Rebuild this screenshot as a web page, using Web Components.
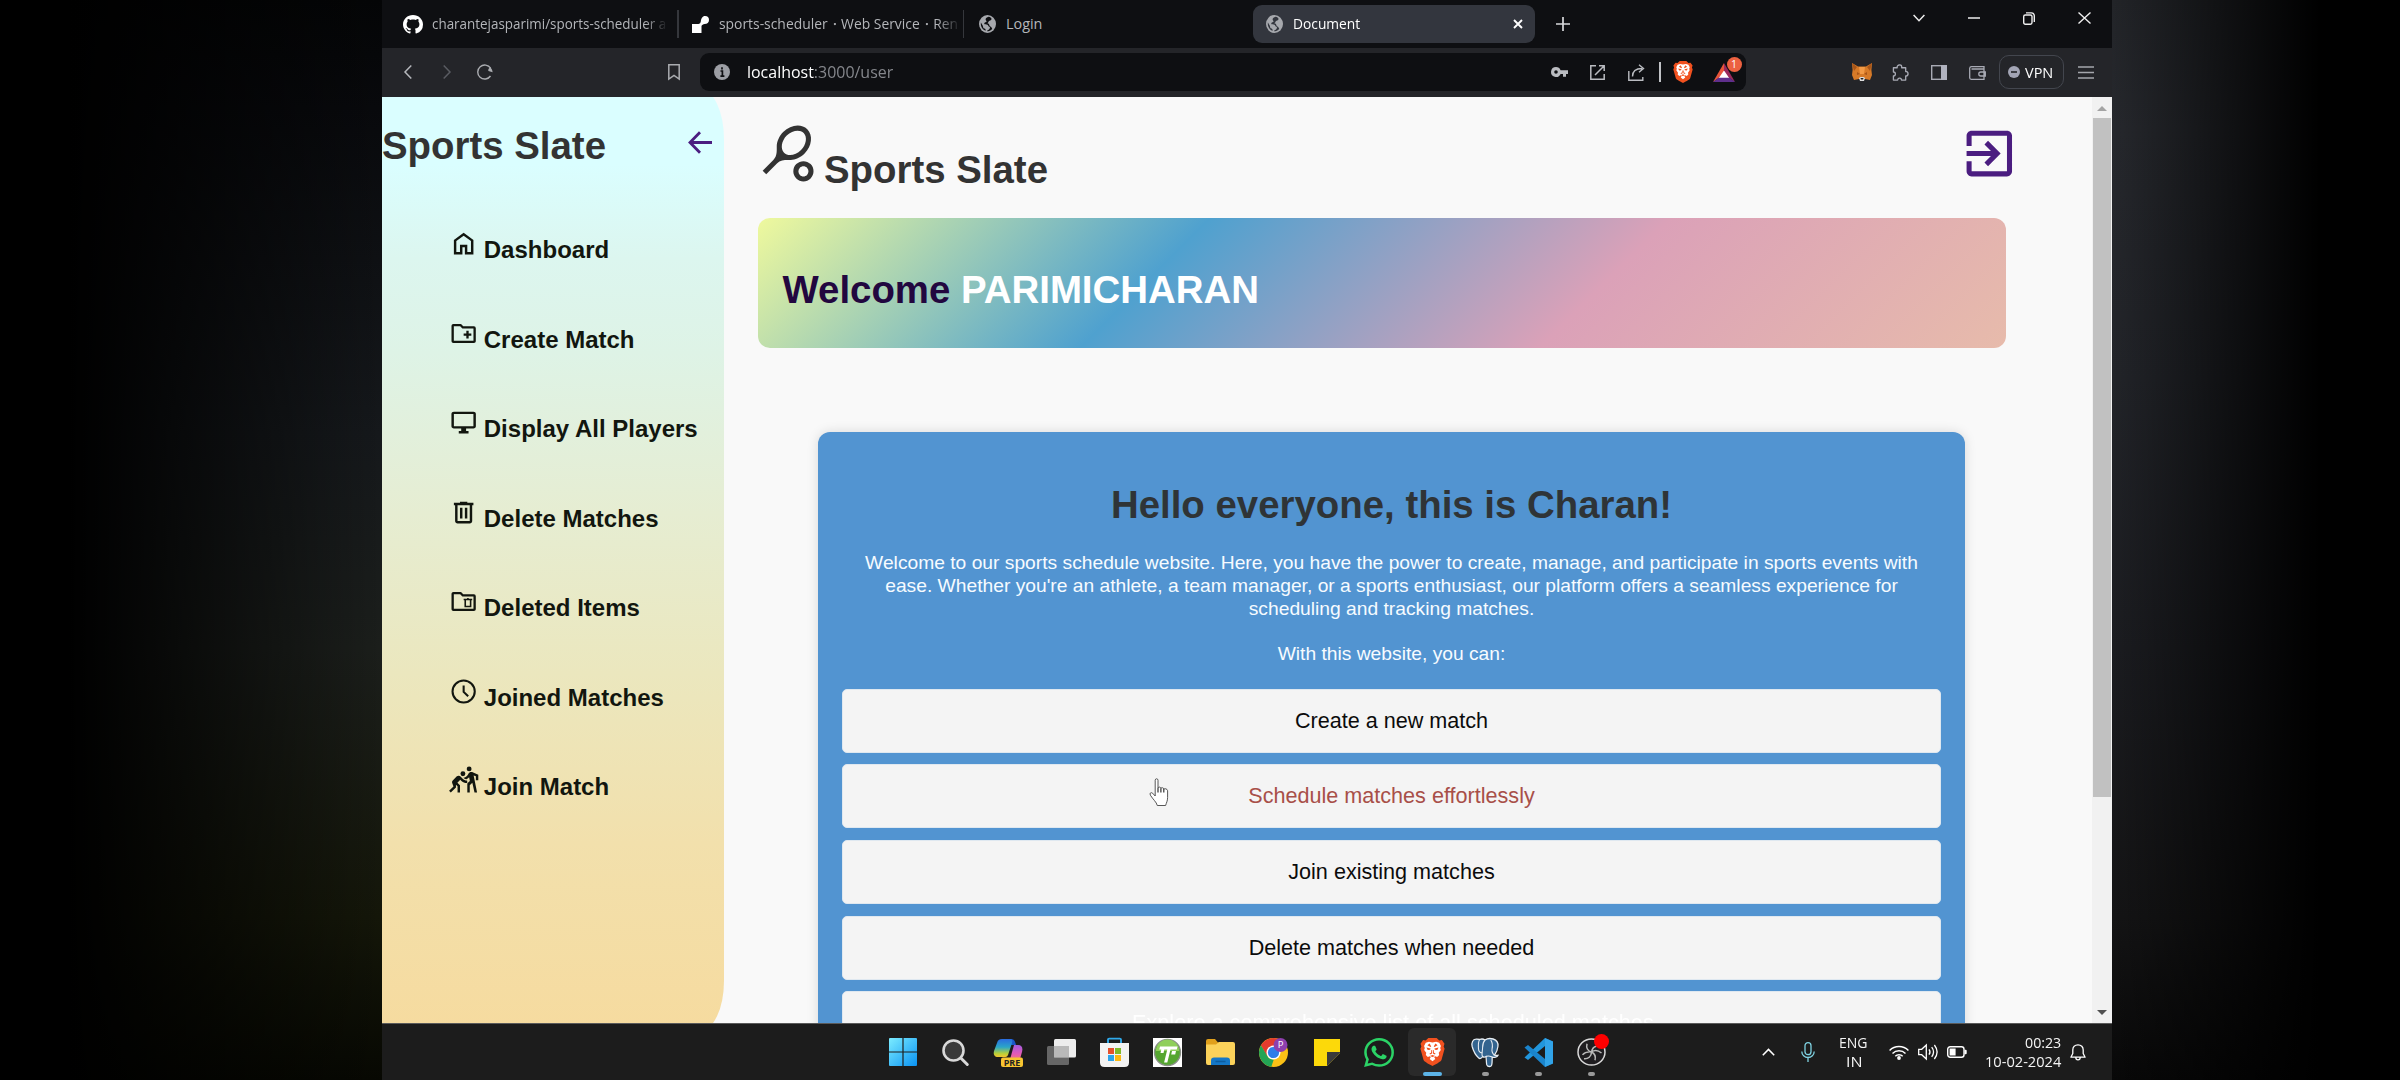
<!DOCTYPE html>
<html lang="en">
<head>
<meta charset="utf-8">
<title>Document</title>
<style>
html,body{margin:0;padding:0;background:#000;width:2400px;height:1080px;overflow:hidden}
body{font-family:"Liberation Sans",Arial,sans-serif}
</style>
</head>
<body>
<desktop-stage></desktop-stage>
<script>
const ICONS = {
github:['0 0 16 16','<path fill="#fff" d="M8 0C3.58 0 0 3.58 0 8c0 3.54 2.29 6.53 5.47 7.59.4.07.55-.17.55-.38 0-.19-.01-.82-.01-1.49-2.01.37-2.53-.49-2.69-.94-.09-.23-.48-.94-.82-1.13-.28-.15-.68-.52-.01-.53.63-.01 1.08.58 1.23.82.72 1.21 1.87.87 2.33.66.07-.52.28-.87.51-1.07-1.78-.2-3.64-.89-3.64-3.95 0-.87.31-1.59.82-2.15-.08-.2-.36-1.02.08-2.12 0 0 .67-.21 2.2.82.64-.18 1.32-.27 2-.27s1.36.09 2 .27c1.53-1.04 2.2-.82 2.2-.82.44 1.1.16 1.92.08 2.12.51.56.82 1.27.82 2.15 0 3.07-1.87 3.75-3.65 3.95.29.25.54.73.54 1.48 0 1.07-.01 1.93-.01 2.2 0 .21.15.46.55.38A8.01 8.01 0 0 0 16 8c0-4.42-3.58-8-8-8z"/>'],
render:['0 0 17 17','<path fill="#fff" d="M0 8h6.5a2.5 2.5 0 0 0 2.3-2.4C9 2.500 10.500 0 13 0a4 4 0 0 1 4 4c0 2.500-1.800 4-4.300 4.100-1.700.1-2.700 1-3.200 2V17H0z"/>'],
globe:['0 0 18 18','<circle cx="9" cy="9" r="9" fill="#a6a8ad"/><path fill="var(--hole,#0e0f12)" d="M10 1.800c-1.500 1-3 1-3 2.600 0 1 1 1.100 1 2 0 .9-2.500.6-2.500 2 0 1.200 2.300.8 3.500 1.300 1.100.5.5 1.600 1.600 1.800 1.400.3 1.200 1.500.4 2.500-.9 1.200-2 1-2.600 2 2 .6 4.200-.4 5.600-1.900-.4-1.500-1-2.200-2-2.600-1.500-.6-.6-2.500-2.300-2.900C8 8.200 10 8 10.200 6.600c.2-1.200 1.600-.6 2.500-1.500.6-.6.6-1.500.2-2.200-.9-.6-1.900-1-2.900-1.100zM2 7.500C1.600 9.800 2.300 12.300 4 14c.9.900 1.800 1.500 3 1.800.3-1-.3-1.900-1.300-2.200-1.500-.5-1.200-1.600-1.600-2.700-.3-.9-1.200-1.700-2.100-3.400z"/>'],
close:['0 0 10 10','<path d="M1 1l8 8M9 1l-8 8" stroke="#fff" stroke-width="1.900"/>'],
plus:['0 0 14 14','<path d="M7 0v14M0 7h14" stroke="#d8d9dc" stroke-width="1.700"/>'],
chev:['0 0 12 8','<path d="M.6 1l5.400 5.700L11.400 1" stroke="#eee" stroke-width="1.500" fill="none"/>'],
min:['0 0 12 2','<path d="M0 1h12" stroke="#eee" stroke-width="1.500"/>'],
rest:['0 0 12 13','<rect x=".7" y="3" width="8.300" height="9.200" rx="1.600" fill="none" stroke="#eee" stroke-width="1.400"/><path d="M3 .9h5.500A2.800 2.800 0 0 1 11.300 3.700V10" fill="none" stroke="#eee" stroke-width="1.400"/>'],
winx:['0 0 13 12','<path d="M.5.5l12 11M12.500.5l-12 11" stroke="#eee" stroke-width="1.400"/>'],
back:['0 0 8 14','<path d="M7.300.5L1 7l6.300 6.500" fill="none" stroke="#b5b7bb" stroke-width="1.500"/>'],
fwd:['0 0 8 14','<path d="M.7.500L7 7 .7 13.500" fill="none" stroke="#5a5c62" stroke-width="1.500"/>'],
reload:['0 0 16 16','<path d="M13.500 12A7 7 0 1 1 13.600 4.200" fill="none" stroke="#aaacb0" stroke-width="1.400"/><path d="M15.600 8.300l-4.200-1.200c-.6-1.400.3-3 2.200-3.600.9 1.200 1.900 2.700 2 4.800z" fill="#aaacb0"/>'],
bookmark:['0 0 12 16','<path d="M.8.800h10.400v14.200L6 11.300.8 15z" fill="none" stroke="#aaacb0" stroke-width="1.500"/>'],
info:['0 0 16 16','<circle cx="8" cy="8" r="8" fill="#9c9ea4"/><path d="M8 3.300v2.200M6.500 7H8.400v5.200M6.400 12.200h4" stroke="#0e0f12" stroke-width="1.700" fill="none"/>'],
key:['0 0 17 10','<path fill="#babcc1" fill-rule="evenodd" d="M5 0a5 5 0 1 0 4.600 7H12v2.800h3V7h2V3.200H9.600A5 5 0 0 0 5 0zm0 3.200a1.800 1.800 0 1 1 0 3.600 1.800 1.800 0 0 1 0-3.600z"/>'],
open:['0 0 15 15','<path d="M6 .800H.8v13.400h13.400V9M9 .8h5.200V6M14 1L5 10" fill="none" stroke="#babcc1" stroke-width="1.500"/>'],
share:['0 0 17 17','<path d="M.8 7v9.200h14V13M4.500 12.500C4.500 7.500 8 4.500 14 4.500M11 .8l4.500 3.700L11 8.300" fill="none" stroke="#babcc1" stroke-width="1.400"/>'],
brave:['0 0 24 28','<path fill="#f1511f" d="M8 0h8l2.500 2.500 2.500-.4 2.500 3.600-.8 2.700.9 2.400-3 11.200c-.4 1.300-4 3.600-8.600 6C7.400 25.600 3.800 23.300 3.400 22L.4 10.800l.9-2.400-.8-2.700L3 2.100l2.500.4z"/><path fill="#fff" d="M12 4.600l3.500-.8 3 1 1.600 3.100-.7 2 .6 2-2 2.900.4 2.300-1.900 2-1.900-.9-.9 1 1 1.700-2.700 2.300-2.700-2.300 1-1.700-.9-1-1.900.9-1.900-2 .4-2.300-2-2.900.6-2-.7-2 1.600-3.100 3-1z"/><path fill="#f1511f" d="M6.200 9.600l4 .9-.5 1.300-2.300.2zM17.800 9.600l-4 .9.500 1.300 2.300.2zM9.200 5.500l1.600 3-.7.6-3-1.800zM14.800 5.500l-1.600 3 .7.6 3-1.800zM10.900 12h.7v3.500l-2 .9-.5-.9 1.500-.8zM13.100 12h-.7v3.500l2 .9.500-.9-1.500-.8zM9.500 18l2.500-1 2.500 1-2.500 1z"/>'],
bat:['0 0 22 20','<path fill="#fff" d="M11 6l6 10H5z"/><path fill="#e8553a" d="M11 0v8L6 15.500 0 20z"/><path fill="#9a2a5c" d="M11 0l11 20-6-4.500L11 8z"/><path fill="#5f2f8c" d="M0 20l5.500-4.500h11L22 20z"/>'],
fox:['0 0 20 18','<path fill="#d67a28" d="M0 0l6 3.500h8L20 0l-.6 7 .6 5-2 5-5-1H7l-5 1-2-5 .6-5z"/><path fill="#a85518" d="M0 0l5 4-3 4zM20 0l-5 4 3 4zM5 9l3 2-3 1zM15 9l-3 2 3 1z"/><path fill="#f29a45" d="M7 4h6l-1 7H8z"/><path fill="#ddd" d="M7 15l1.500-1h3L13 15l-1 3H8z"/><path fill="#222" d="M8.500 15h3l-.5 1.500H9z"/>'],
puzzle:['0 0 18 18','<path d="M1.500 4h4c-.8-3 4.500-4.500 4.800-1 0 .4 0 .7-.1 1h4.300v4c3-.6 3.500 4.500.3 4.800l-.3-.1V17H10c.3-2.500-3.800-2.800-4 0H1.500v-4.500c2.800 0 2.800-4 0-4z" fill="none" stroke="#a8aab4" stroke-width="1.400" stroke-linejoin="round"/>'],
panel:['0 0 16 15','<rect x=".7" y=".7" width="14.600" height="13.600" fill="none" stroke="#a8aab4" stroke-width="1.400"/><path d="M10 0h6v15h-6z" fill="#b0b2be"/>'],
wallet:['0 0 17 15','<path d="M15 4V1.700H2.500a1.800 1.800 0 0 0-1.800 1.600v9.500c0 .9.500 1.500 1.500 1.500H15V4H2.500M16.300 7v4h-4.500a2 2 0 0 1 0-4z" fill="none" stroke="#a8aab4" stroke-width="1.300"/>'],
vpn:['0 0 12 12','<circle cx="6" cy="6" r="6" fill="#a3a5b5"/><path d="M3 6h6" stroke="#242529" stroke-width="1.600"/>'],
menu:['0 0 16 13','<path d="M0 1h16M0 6.500h16M0 12h16" stroke="#a4a6ac" stroke-width="1.400"/>'],
left:['0 0 24 23','<path d="M12 1.200L2 11.500 12 21.800M2 11.500h22" fill="none" stroke="#4b1d80" stroke-width="2.800"/>'],
home:['0 0 24 24','<path d="M6 19h3v-6h6v6h3v-9l-6-4.500L6 10v9Zm-2 2V9l8-6 8 6v12h-7v-6h-2v6H4Z"/>'],
folderadd:['0 0 24 24','<path fill="none" stroke="currentColor" stroke-width="1.900" stroke-linejoin="round" d="M3 5.500Q3 5 3.600 5h5.800l2 2h9Q21 7 21 7.600v10.900q0 .5-.6.5H3.600q-.6 0-.6-.5z"/><path d="M14.200 9.800h1.900v2.200h2.200v1.900h-2.200v2.200h-1.900v-2.200H12V12h2.200z"/>'],
monitor:['0 0 24 24','<path d="M8 21v-2h2v-2H4q-.825 0-1.412-.587T2 15V5q0-.825.588-1.412T4 3h16q.825 0 1.413.588T22 5v10q0 .825-.587 1.413T20 17h-6v2h2v2H8Zm-4-6h16V5H4v10Z"/>'],
trash:['0 0 24 24','<path fill-rule="evenodd" d="M7 21q-.825 0-1.412-.587T5 19V6H4V4h5V3h6v1h5v2h-1v13q0 .825-.587 1.413T17 21H7ZM17 6H7v13h10V6ZM9 17h2V8H9v9Zm4 0h2V8h-2v9Z"/>'],
folderdel:['0 0 24 24','<path fill="none" stroke="currentColor" stroke-width="1.900" stroke-linejoin="round" d="M3 5.500Q3 5 3.600 5h5.800l2 2h9Q21 7 21 7.600v10.900q0 .5-.6.5H3.600q-.6 0-.6-.5z"/><path fill="none" stroke="currentColor" stroke-width="1.300" d="M12 10.400h7M15.500 9v1.500M13.300 10.500v5.700h4.400v-5.700"/>'],
clock:['0 0 24 24','<circle cx="12" cy="12" r="9.100" fill="none" stroke="currentColor" stroke-width="1.700"/><path d="M12 7v5.300l3.700 3.700" fill="none" stroke="currentColor" stroke-width="1.700"/>'],
kabaddi:['0 0 24 24','<circle cx="16.500" cy="2.380" r="2"/><path d="M24 11.880v-4.700l-5.050-2.140c-.97-.41-2.090-.06-2.650.84l-1 1.600c-.67 1.180-1.910 2.060-3.410 2.320l.06.06c.69.69 1.520 1.070 2.460 1.170.8-.42 1.520-.98 2.090-1.640l.6 3-1.160 1.100-.94.890v7.500h2v-6l2.100-2 1.800 8H23l-2.180-11-.62-3.100 1.800.7v3.400H24zM11.240 10.560l-2-2c-.1-.1-.2-.18-.31-.26-.22-.14-.47-.24-.72-.28-.13-.03-.25-.04-.38-.04-.51 0-1.020.2-1.410.59l-3.340 3.340c-.41.410-.62.980-.58 1.540 0 .18.04.37.11.55l1.070 2.950-3.630 3.630L1.460 22l4.240-4.240v-2.220L7 16.750v5.130h2v-6l-2.120-2.120 2.360-2.360.71.71c1.290 1.260 2.970 2.040 5.030 2.040l-.14-2.070c-1.500-.02-2.700-.62-3.600-1.520z"/><circle cx="11.400" cy="6.400" r="2"/>'],
tennis:['0 0 24 24','<path fill-rule="evenodd" d="M19.520 2.490c-2.340-2.340-6.620-1.870-9.550 1.060-1.600 1.600-2.520 3.870-2.540 5.460-.02 1.580.26 3.890-1.350 5.500l-4.240 4.240 1.420 1.420 4.240-4.240c1.610-1.610 3.920-1.330 5.500-1.350s3.860-.94 5.460-2.540c2.920-2.930 3.400-7.210 1.060-9.550zm-9.200 9.190c-1.530-1.530-1.050-4.610 1.060-6.720s5.180-2.590 6.720-1.060c1.530 1.530 1.050 4.610-1.060 6.720s-5.180 2.590-6.720 1.060zM18 17c.53 0 1.040.21 1.410.59.78.78.78 2.050 0 2.830-.37.370-.88.580-1.410.580s-1.040-.21-1.410-.59c-.78-.78-.78-2.050 0-2.830.37-.37.88-.58 1.410-.58m0-2c-1.020 0-2.050.39-2.830 1.170-1.560 1.560-1.560 4.090 0 5.660.78.780 1.810 1.170 2.830 1.170s2.050-.39 2.830-1.170c1.560-1.560 1.560-4.090 0-5.660C20.050 15.390 19.020 15 18 15z"/>'],
exit:['0 0 24 24','<path d="M10.090 15.590L11.500 17l5-5-5-5-1.410 1.410L12.670 11H3v2h9.670l-2.580 2.590zM19 3H5c-1.110 0-2 .9-2 2v4h2V5h14v14H5v-4H3v4c0 1.100.89 2 2 2h14c1.100 0 2-.9 2-2V5c0-1.100-.9-2-2-2z"/>'],
hand:['0 0 20 28','<path d="M6.200 18V2.200C6.200.300 9 .300 9 2.200V10c.4-1.300 2.700-1.200 2.900.3.600-1 2.800-.7 2.900.8.800-.8 3.500-.4 3.800 1.600v6.800c0 3.500-1.200 5.200-2 8H8.300C7.500 24 4 21.500 1.400 17.200c-1.100-2 .6-3.300 2.200-2z" fill="#fff" stroke="#444" stroke-width=".9"/><path d="M9 10v4.500M11.900 10.300v4.200M14.800 11v3.500" stroke="#333" stroke-width="1.200"/>'],
win:['0 0 28 28','<defs><linearGradient id="w" x2="1" y2="1"><stop stop-color="#7cecff"/><stop offset="1" stop-color="#0a93f4"/></linearGradient></defs><path fill="url(#w)" d="M1 0h12.400v13.400H0V1a1 1 0 0 1 1-1zM14.600 0H27a1 1 0 0 1 1 1v12.400H14.600zM0 14.600h13.400V28H1a1 1 0 0 1-1-1zM14.600 14.600H28V27a1 1 0 0 1-1 1H14.600z"/>'],
search:['0 0 27 27','<circle cx="11.500" cy="11.500" r="10" fill="#3a3a3a" stroke="#d8d8d8" stroke-width="2.600"/><path d="M18.800 19l6.500 6.500" stroke="#d8d8d8" stroke-width="3" stroke-linecap="round"/>'],
copilot:['0 0 29 29','<defs><linearGradient id="a" x2="0" y2="1"><stop stop-color="#2a6be0"/><stop offset=".45" stop-color="#2aa6c8"/><stop offset=".8" stop-color="#b6cf3a"/><stop offset="1" stop-color="#f4c52e"/></linearGradient><linearGradient id="b" x2="0" y2="1"><stop stop-color="#a35be0"/><stop offset=".5" stop-color="#e45bb5"/><stop offset="1" stop-color="#f08a5c"/></linearGradient></defs><path fill="#1b56c8" d="M9 1h8c3 0 4 2 5 6h-7z"/><path fill="url(#b)" d="M20 7h4c4 0 5 3 4 7l-2 7c-1 3-3 4-6 4h-5z"/><path fill="url(#a)" d="M8 1h8c2 0 3 1 2 4l-4 12c-1 2-2 2-4 2H4c-3 0-5-2-4-6L3 5c1-3 2-4 5-4z"/><rect x="7" y="19.500" width="22" height="9.500" rx="2" fill="#f9c531"/><text x="18" y="27.500" text-anchor="middle" font-family="Open Sans,sans-serif" font-weight="700" font-size="9" fill="#222">PRE</text>'],
task:['0 0 29 27','<rect x="7" width="22" height="18.500" rx="1.500" fill="#ededed"/><rect y="7" width="22" height="19" rx="1.500" fill="#7b7b7b" opacity=".78"/><rect x="7" y="7" width="15" height="11.500" fill="#b9b9b9"/>'],
store:['0 0 29 29','<path d="M8 6V1.800q0-1.200 1.200-1.200h10.600q1.200 0 1.200 1.200V6" fill="none" stroke="#2fa9ea" stroke-width="1.900"/><path d="M0 5h29v19.500q0 4.500-4.500 4.500h-20Q0 29 0 24.500z" fill="#f3f3f3"/><path fill="#e5512c" d="M8 10h6v6H8z"/><path fill="#7fba2a" d="M15 10h6v6h-6z"/><path fill="#2ca4ea" d="M8 17h6v6H8z"/><path fill="#fcb913" d="M15 17h6v6h-6z"/>'],
green:['0 0 29 29','<path fill="#fff" d="M0 0h29v29H0z"/><circle cx="14.500" cy="14.500" r="13" fill="#55a630" stroke="#8a8f88" stroke-width="1.300"/><path fill="#8fcf5a" d="M3 13a11.500 11.500 0 0 1 23 0z"/><path fill="#fff" d="M7 8.500h17.500l-.7 3h-6.300l-3.200 13h-3.200l3.200-13h-3l-.8 3.500H7.500l.8-3.500H6.300zM19 13h4l-.8 3.500h-4z"/>'],
files:['0 0 29 26','<path fill="#e0a01c" d="M0 2q0-2 2-2h7l3 3.500h14v8H0z"/><path fill="#fbd25a" d="M0 5.500h10L13 3h14q2 0 2 2v19q0 2-2 2H2q-2 0-2-2z"/><path fill="#1577c6" d="M5 26v-4.500q0-3 3-3h13q3 0 3 3V26z"/><path d="M9.500 22.500h10" stroke="#0d5c9e" stroke-width="1.500"/>'],
chrome:['0 0 29 29','<circle cx="14.500" cy="14.500" r="14.500" fill="#fbc116"/><path fill="#e33b2e" d="M1.900 7.300A14.500 14.500 0 0 1 27 7.300H14.500L8 18z"/><path fill="#23a455" d="M1.900 7.300L8.300 18c1.500 2.500 4 3.500 6.500 3.500l-2.500 7.300A14.500 14.500 0 0 1 1.900 7.300z"/><circle cx="14.500" cy="14.500" r="7" fill="#fff"/><circle cx="14.500" cy="14.500" r="5.600" fill="#2f7de9"/><circle cx="21.500" cy="7" r="7" fill="#8e3fae"/><text x="21.500" y="10.300" text-anchor="middle" font-family="Open Sans,sans-serif" font-size="9.500" fill="#fff">P</text>'],
note:['0 0 26 27','<path fill="#fcd90a" d="M0 0h26v14L13 27H0z"/><path fill="#3b3b3b" d="M26 13v1L13 27V13z"/><path fill="#8a7d20" d="M26 14L13 27h13z" opacity="0"/>'],
whatsapp:['0 0 24 24','<path fill="#2bd366" d="M17.472 14.382c-.297-.149-1.758-.867-2.030-.967-.273-.099-.471-.148-.67.150-.197.297-.767.966-.94 1.164-.173.199-.347.223-.644.075-.297-.15-1.255-.463-2.390-1.475-.883-.788-1.480-1.761-1.653-2.059-.173-.297-.018-.458.130-.606.134-.133.298-.347.446-.52.149-.174.198-.298.298-.497.099-.198.050-.371-.025-.52-.075-.149-.669-1.612-.916-2.207-.242-.579-.487-.5-.669-.51-.173-.008-.371-.01-.57-.01-.198 0-.52.074-.792.372-.272.297-1.040 1.016-1.040 2.479 0 1.462 1.065 2.875 1.213 3.074.149.198 2.096 3.200 5.077 4.487.709.306 1.262.489 1.694.625.712.227 1.360.195 1.871.118.571-.085 1.758-.719 2.006-1.413.248-.694.248-1.289.173-1.413-.074-.124-.272-.198-.57-.347m-5.421 7.403h-.004a9.870 9.870 0 0 1-5.031-1.378l-.361-.214-3.741.982.998-3.648-.235-.374a9.860 9.860 0 0 1-1.510-5.260c.001-5.450 4.436-9.884 9.888-9.884 2.640 0 5.122 1.030 6.988 2.898a9.825 9.825 0 0 1 2.893 6.994c-.003 5.450-4.437 9.884-9.885 9.884m8.413-18.297A11.815 11.815 0 0 0 12.050 0C5.495 0 .16 5.335.157 11.892c0 2.096.547 4.142 1.588 5.945L.057 24l6.305-1.654a11.882 11.882 0 0 0 5.683 1.448h.005c6.554 0 11.890-5.335 11.893-11.893a11.821 11.821 0 0 0-3.480-8.413z"/>'],
pg:['0 0 29 29','<path fill="#33648f" stroke="#e8eef3" stroke-width="1.300" d="M9 1.500c2-.8 4-.5 5.500.5C16.500.6 20 .2 23 1c3.500 1 5.300 4 4.900 7.500-.3 3-2 6.500-3.600 8.700 1.500.4 2.500.3 3.700.1-1 2-4 2.500-6 1.800-.3 3 .2 5.500-.6 8-.7 1.900-4.500 2-5.100-.4-.6-2.700-.2-5-.8-8.200-1.500 1-2.500.9-3.500 0-1 1.500-2.500 2.700-4 1.500C5 17.500 2.500 13 1.200 8.500.2 4.500 2 1.500 5 1.200c1.500-.2 2.800 0 4 .3z"/><path fill="none" stroke="#e8eef3" stroke-width="1.100" d="M9 1.500c-1.500 2-1.500 6-1.300 9 .2 2.500 1.800 4.500 4.300 4.500M12 18.500c-1.500-1.500 0-5 0-9 0-3 1-6 2.500-7.500M20.500 2c2 3 2 6 1.300 9-.5 2.500.5 4.500 2.500 6.200M15.500 18.500c2-1 4-.5 6.300.6"/>'],
code:['0 0 29 29','<path fill="#1478bf" d="M21 0l8 3.500v22L21 29z"/><path fill="#2196dc" d="M21 0v8L4 22 .5 19.500z"/><path fill="#1a84cc" d="M21 29v-8L4 7 .5 9.500z"/><path fill="#38aef2" d="M21 0l8 3.500v22L21 29z" opacity=".8"/>'],
obs:['0 0 29 29','<circle cx="14.500" cy="14.500" r="13.500" fill="#1f1d20" stroke="#d9d9d9" stroke-width="1.500"/><path fill="none" stroke="#b9b9b9" stroke-width="1.500" d="M10 6c-1 4 .5 7.500 4.500 8.500M24.500 15.500c-3.500-3-7.500-3-10-1M7 21.500c4 .5 7.500-2.500 7.500-7M14.500 14.500c3 1.500 4.500 4.500 3.500 8.500M14.500 14.500c.5-3.500 2.500-5.500 5-6M14.500 14.500c-3.500-.5-7 .5-9 3"/>'],
up:['0 0 13 8','<path d="M.8 7.200l5.700-5.800 5.700 5.800" stroke="#fff" stroke-width="1.500" fill="none"/>'],
mic:['0 0 14 20','<rect x="4" y=".7" width="6" height="12" rx="3" fill="none" stroke="#7fd3e2" stroke-width="1.300"/><path d="M.8 9.500a6.200 6 0 0 0 12.400 0M7 15.700V20" fill="none" stroke="#7fd3e2" stroke-width="1.300"/>'],
wifi:['0 0 20 15','<g fill="none" stroke="#fff" stroke-width="1.500"><path d="M.6 5.500a13.300 13.300 0 0 1 18.800 0M3.500 8.500a9.200 9.200 0 0 1 13 0M6.300 11.300a5.200 5.200 0 0 1 7.400 0"/></g><circle cx="10" cy="13" r="1.900" fill="#fff"/>'],
vol:['0 0 20 16','<g fill="none" stroke="#fff" stroke-width="1.300"><path d="M.7 5.300h3L8.300 1v14L3.700 10.700h-3zM11 5.300q2 2.700 0 5.400M13.700 3.200q3.700 4.800 0 9.600M16.400 1q5.400 7 0 14"/></g>'],
bat2:['0 0 20 12','<rect x=".7" y=".7" width="16.300" height="10.600" rx="2.500" fill="none" stroke="#fff" stroke-width="1.400"/><path d="M2.600 2.600h6v6.800h-6zM17.500 3.800h1.200q1 0 1 1v2.400q0 1-1 1h-1.200z" fill="#fff"/>'],
bell:['0 0 16 17','<path d="M8 .8c-3.200 0-5.200 2.300-5.200 5.200v3.500L.9 13.200h14.200l-1.900-3.700V6C13.200 3.100 11.200.8 8 .8zM5.800 13.500a2.200 2.400 0 0 0 4.400 0" fill="none" stroke="#fff" stroke-width="1.300" stroke-linejoin="round"/>']
};

const define = (name, html, ready) => customElements.define(name, class extends HTMLElement {
  connectedCallback() {
    if (this.shadowRoot) return;
    this.attachShadow({mode:'open'}).innerHTML = html;
    if (ready) ready.call(this, this.shadowRoot);
  }
});

/* g-icon: n = glyph name, w/h = box size, l = space before it */
define('g-icon', '<style>:host{display:block;flex:none;color:inherit}svg{display:block;width:100%;height:100%;overflow:visible;fill:currentColor}</style>', function (root) {
  const [box, body] = ICONS[this.getAttribute('n')];
  this.style.width = this.getAttribute('w') + 'px';
  this.style.height = this.getAttribute('h') + 'px';
  if (this.hasAttribute('l')) this.style.marginLeft = this.getAttribute('l') + 'px';
  root.innerHTML += `<svg viewBox="${box}" preserveAspectRatio="none">${body}</svg>`;
});

/* fit-text: a single line whose advance is set to w pixels */
define('fit-text', '<style>:host{display:block;flex:none;white-space:nowrap}span{display:inline-block;transform-origin:0 50%}</style><span><slot></slot></span>', function (root) {
  const span = root.querySelector('span');
  if (this.hasAttribute('l')) this.style.marginLeft = this.getAttribute('l') + 'px';
  const w = +this.getAttribute('w');
  if (w) {
    const natural = span.offsetWidth;
    this.style.width = w + 'px';
    span.style.transform = `scaleX(${w / natural})`;
  }
});

define('tab-strip', `<style>
:host{display:flex;height:48px;background:#0e0f12;align-items:center;font:14.4px/20px "Open Sans","Noto Sans",sans-serif;color:#b4b6ba}
i{width:1.500px;height:28px;background:#35373c;flex:none}
.fade{-webkit-mask:linear-gradient(90deg,#000 90%,transparent);mask:linear-gradient(90deg,#000 90%,transparent);width:236px;flex:none}
.active{display:flex;align-items:center;width:282px;height:38px;margin-left:211px;border-radius:9px;background:#33363e;color:#fff;--hole:#33363e}
.win{display:flex;align-items:center;height:36px;align-self:flex-start;margin-left:343px}
</style>
<g-icon n="github" w="20" h="19" l="21"></g-icon><div class="fade" style="margin-left:9px"><fit-text w="234">charantejasparimi/sports-scheduler a</fit-text></div>
<i style="margin-left:9px"></i>
<g-icon n="render" w="17" h="17" l="13"></g-icon><div class="fade" style="margin-left:10px;width:242px"><fit-text w="239">sports-scheduler・Web Service・Ren</fit-text></div>
<i style="margin-left:2px"></i>
<g-icon n="globe" w="17" h="18" l="15"></g-icon><fit-text w="36" l="10">Login</fit-text>
<div class="active"><g-icon n="globe" w="17" h="18" l="13"></g-icon><fit-text w="67" l="10">Document</fit-text><g-icon n="close" w="10" h="10" l="153"></g-icon></div>
<g-icon n="plus" w="14" h="14" l="21"></g-icon>
<div class="win"><g-icon n="chev" w="12" h="8"></g-icon><g-icon n="min" w="12" h="2" l="43"></g-icon><g-icon n="rest" w="12" h="13" l="43"></g-icon><g-icon n="winx" w="13" h="12" l="43"></g-icon></div>`);

define('tool-bar', `<style>
:host{display:flex;height:49px;background:#242529;align-items:center;box-sizing:border-box;padding-bottom:1px;font:16.500px/24px "Open Sans","Noto Sans",sans-serif;color:#fff}
.url{display:flex;align-items:center;height:38px;width:1046px;margin-left:20px;border-radius:9px;background:#0e0f12}
.dim{color:#85878c}
.sep{width:1.500px;height:20px;background:#c0c2c6;margin-left:14px}
.bat{position:relative;margin-left:20px}
.badge{position:absolute;left:14px;top:-6px;width:15px;height:15px;border-radius:50%;background:#ec6140;font-size:10.500px;line-height:15px;text-align:center}
.vpn{display:flex;align-items:center;box-sizing:border-box;width:65px;height:34px;margin-left:13px;border:1.500px solid #43464e;border-radius:10px;font-size:15px}
</style>
<g-icon n="back" w="8" h="14" l="22"></g-icon><g-icon n="fwd" w="8" h="14" l="31"></g-icon><g-icon n="reload" w="16" h="16" l="26"></g-icon><g-icon n="bookmark" w="12" h="16" l="175"></g-icon>
<div class="url"><g-icon n="info" w="16" h="16" l="14"></g-icon><fit-text w="146" l="17">localhost<span class="dim">:3000/user</span></fit-text>
<g-icon n="key" w="17" h="10" l="658"></g-icon><g-icon n="open" w="15" h="15" l="22"></g-icon><g-icon n="share" w="17" h="17" l="23"></g-icon><div class="sep"></div><g-icon n="brave" w="20" h="22" l="12"></g-icon><div class="bat"><g-icon n="bat" w="22" h="19"></g-icon><div class="badge">1</div></div></div>
<g-icon n="fox" w="20" h="18" l="106"></g-icon><g-icon n="puzzle" w="17" h="17" l="20"></g-icon><g-icon n="panel" w="16" h="15" l="22"></g-icon><g-icon n="wallet" w="17" h="15" l="22"></g-icon>
<div class="vpn"><g-icon n="vpn" w="12" h="12" l="8"></g-icon><fit-text w="28" l="5">VPN</fit-text></div><g-icon n="menu" w="16" h="13" l="14"></g-icon>`);

define('nav-item', `<style>:host{display:flex;align-items:center;height:89.500px;padding-left:66.800px;font:bold 24px/30px "Liberation Sans",Arial,sans-serif;color:#12160f}g-icon{margin-bottom:12.400px;margin-right:5.700px}span{margin-top:1.200px}</style><span><slot></slot></span>`, function (root) {
  const icon = document.createElement('g-icon');
  icon.setAttribute('n', this.getAttribute('icon'));
  icon.setAttribute('w', 29.3); icon.setAttribute('h', 29);
  root.insertBefore(icon, root.querySelector('span'));
});

define('side-bar', `<style>
:host{display:block;width:342px;height:942px;margin-top:-8px;flex:none;border-radius:0 24px 24px 0/0 50px 50px 0;background:linear-gradient(#dafeff 0,#dafeff 8%,#dcf6ef 18%,#def3e6 28%,#e6edd2 45%,#ebe7be 62%,#f2e0ac 80%,#f6db9f 100%)}
header{display:flex;height:116px;align-items:flex-start;box-sizing:border-box;padding-top:34.600px}
h1{margin:0;font:bold 38.400px/44px "Liberation Sans",Arial,sans-serif;color:#333}
g-icon{margin-top:7px}
</style>
<header><h1>Sports Slate</h1><g-icon n="left" w="24" h="23" l="82"></g-icon></header>
<nav-item icon="home">Dashboard</nav-item><nav-item icon="folderadd">Create Match</nav-item><nav-item icon="monitor">Display All Players</nav-item><nav-item icon="trash">Delete Matches</nav-item><nav-item icon="folderdel">Deleted Items</nav-item><nav-item icon="clock">Joined Matches</nav-item><nav-item icon="kabaddi">Join Match</nav-item>`);

define('list-card', `<style>:host{display:flex;align-items:center;justify-content:center;box-sizing:border-box;height:64px;border-radius:5px;background:#f4f4f4;border:1px solid #dfe8f0;font-size:21.600px;color:#0b0b0b}</style><slot></slot>`);

define('hello-card', `<style>
:host{display:block;box-sizing:border-box;width:1147px;height:760px;margin:84.400px 0 0 94px;padding:50.600px 24px 0;border-radius:12px;background:#5294d1;box-shadow:0 0 12px rgba(0,0,0,.13);text-align:center;color:#f6fbff;position:relative}
h1{margin:0;font-size:38.400px;line-height:44px;color:#2f3437}
p{margin:25.200px 0 0;font-size:19.240px;line-height:22.700px;white-space:nowrap}
.list{display:flex;flex-direction:column;gap:11.700px;margin-top:23px}
.hand{position:absolute;left:331px;top:346px}
</style>
<h1>Hello everyone, this is Charan!</h1>
<p>Welcome to our sports schedule website. Here, you have the power to create, manage, and participate in sports events with<br>ease. Whether you're an athlete, a team manager, or a sports enthusiast, our platform offers a seamless experience for<br>scheduling and tracking matches.<br><br>With this website, you can:</p>
<div class="list"><list-card>Create a new match</list-card><list-card style="color:#a84f48">Schedule matches effortlessly</list-card><list-card>Join existing matches</list-card><list-card>Delete matches when needed</list-card><list-card style="color:#fff"><fit-text w="522">Explore a comprehensive list of all scheduled matches</fit-text></list-card></div>
<g-icon class="hand" n="hand" w="20" h="28"></g-icon>`);

define('main-area', `<style>
:host{display:block;flex:1;overflow:hidden;background:#f9f9f9;color:#333}
header{display:flex;box-sizing:border-box;height:121px;padding:25.500px 72.400px 0 34.400px}
h1{margin:0;font:bold 38.400px/44px "Liberation Sans",Arial,sans-serif}
header h1{margin:25.800px 0 0 5px}
.exit{margin-left:auto;color:#4b1d80}
.banner{display:flex;align-items:center;box-sizing:border-box;width:1248px;height:130px;margin-left:34px;padding:13.600px 0 0 24.500px;border-radius:12px;background:linear-gradient(135deg,#eff99d,#4fa1cf 32.800%,#dba1b8 66.200%,#e7bbab)}
.banner h1{color:#22073f}.banner b{color:#fff}
</style>
<header><g-icon n="tennis" w="60.6" h="61"></g-icon><h1>Sports Slate</h1><g-icon class="exit" n="exit" w="60.6" h="61"></g-icon></header>
<div class="banner"><h1>Welcome <b>PARIMICHARAN</b></h1></div>
<hello-card></hello-card>`);

define('scroll-bar', `<style>
:host{display:flex;flex-direction:column;align-items:center;box-sizing:border-box;width:20px;height:926px;flex:none;background:#f1f1f1;padding:8.500px 0 8px}
i{border:5.500px solid transparent;border-top:0;border-bottom:5.500px solid #a3a3a3}
div{width:18px;height:679px;background:#c1c1c1;margin-top:7px}
.d{margin-top:auto;border:5.500px solid transparent;border-bottom:0;border-top:5.500px solid #505050}
</style><i></i><div></div><i class="d"></i>`);

define('task-bar', `<style>
:host{display:flex;align-items:center;box-sizing:border-box;height:57px;background:#1c1c1c;border-top:1.500px solid #5a5a5a;font:15px/19px "Open Sans","Noto Sans",sans-serif;color:#f4f4f4}
.apps{display:flex;margin-left:497px}
.app{position:relative;display:flex;align-items:center;justify-content:center;width:48px;height:48px;margin-right:4.950px;border-radius:6px}
.on{background:#2a2a2a}
.app i{position:absolute;bottom:0;left:20.500px;width:7px;height:4px;border-radius:2px;background:#9a9a9a}
.on i{left:14.500px;width:19px;background:#5cb4e8}
.dot{position:absolute;right:6px;top:6px;width:15px;height:15px;border-radius:50%;background:#f00}
.tray{display:flex;align-items:center;flex:1}
.col{display:flex;flex-direction:column}
</style><div class="apps"></div>
<div class="tray"><g-icon n="up" w="13" h="8" l="142"></g-icon><g-icon n="mic" w="14" h="20" l="26"></g-icon>
<div class="col" style="align-items:center;margin-left:24px"><fit-text w="29">ENG</fit-text><fit-text w="16">IN</fit-text></div>
<g-icon n="wifi" w="20" h="15" l="21"></g-icon><g-icon n="vol" w="20" h="16" l="9"></g-icon><g-icon n="bat2" w="20" h="12" l="9"></g-icon>
<div class="col" style="align-items:flex-end;margin-left:18px"><fit-text w="36">00:23</fit-text><fit-text w="76">10-02-2024</fit-text></div><g-icon n="bell" w="16" h="17" l="9"></g-icon></div>`, function (root) {
  const apps = [['win',28,28],['search',27,27],['copilot',29,29],['task',29,27],['store',29,29],['green',29,29],['files',29,26],['chrome',29,29],['note',26,27],['whatsapp',30,29],['brave',25,28],['pg',28,29],['code',29,29],['obs',29,28]];
  root.querySelector('.apps').innerHTML = apps.map(([n, w, h], k) =>
    `<div class="app${k === 10 ? ' on' : ''}"><g-icon n="${n}" w="${w}" h="${h}"></g-icon>${k > 9 ? '<i></i>' : ''}${n === 'obs' ? '<span class="dot"></span>' : ''}</div>`).join('');
});

define('desktop-stage', `<style>
:host{display:grid;grid-template-columns:382px 1730px 288px;width:2400px;height:1080px;overflow:hidden;background:#000}
.l{background:linear-gradient(90deg,#000 18%,transparent 100%),linear-gradient(#040506 0,#08090c 10%,#15181b 40%,#1b1e1b 60%,#141609 85%,#070802 100%)}
.r{background:linear-gradient(270deg,#000 28%,transparent 100%),linear-gradient(#222428 0,#26282d 12%,#222429 35%,#1b1c20 60%,#141415 85%,#080808 100%)}
.screen{display:flex;flex-direction:column;overflow:hidden}
.page{display:flex;height:926px;overflow:hidden;background:#f9f9f9}
</style><div class="l"></div><div class="screen"><tab-strip></tab-strip><tool-bar></tool-bar><div class="page"><side-bar></side-bar><main-area></main-area><scroll-bar></scroll-bar></div><task-bar></task-bar></div><div class="r"></div>`);
</script>
</body>
</html>
